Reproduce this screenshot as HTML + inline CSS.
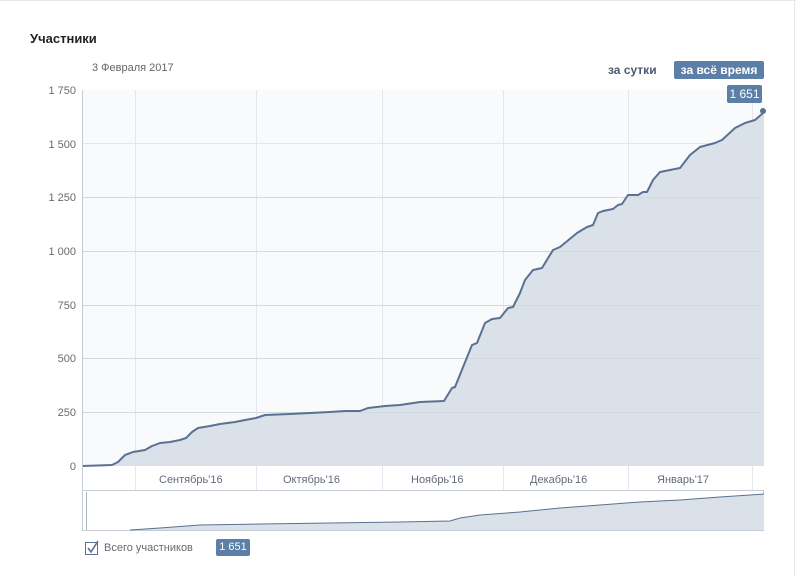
<!DOCTYPE html>
<html><head><meta charset="utf-8"><style>
body{margin:0;width:796px;height:576px;background:#fff;font-family:"Liberation Sans","DejaVu Sans",sans-serif;overflow:hidden;position:relative}
.t{position:absolute;white-space:nowrap;z-index:2}
</style></head><body>
<div style="position:absolute;left:0;top:0;width:796px;height:1px;background:#e7e8ec"></div>
<div style="position:absolute;left:794px;top:0;width:1px;height:576px;background:#e7e8ec"></div>
<svg style="position:absolute;left:0;top:0;z-index:1" width="796" height="576">
<rect x="82" y="90" width="681" height="376" fill="#f9fafb"/>
<g stroke="#e3e6ea" stroke-width="1">
<line x1="82" y1="143.5" x2="763" y2="143.5"/><line x1="82" y1="197.5" x2="763" y2="197.5"/><line x1="82" y1="251.5" x2="763" y2="251.5"/><line x1="82" y1="305.5" x2="763" y2="305.5"/><line x1="82" y1="358.5" x2="763" y2="358.5"/><line x1="82" y1="412.5" x2="763" y2="412.5"/>
<line x1="135.5" y1="90" x2="135.5" y2="490"/><line x1="256.5" y1="90" x2="256.5" y2="490"/><line x1="382.5" y1="90" x2="382.5" y2="490"/><line x1="503.5" y1="90" x2="503.5" y2="490"/><line x1="628.5" y1="90" x2="628.5" y2="490"/><line x1="752.5" y1="90" x2="752.5" y2="490"/>
</g>
<path d="M82,466 L112,465 118,462 125,455 133,452 145,450 152,446 160,443 170,442 180,440 186,438 192,432 198,428 210,426 220,424 235,422 245,420 256,418 265,415 290,414 310,413 330,412 345,411 360,411 368,408 385,406 400,405 420,402 444,401 452,388 455,387 472,345 477,343 485,323 492,319 500,318 508,308 513,307 520,293 525,280 533,270 542,268 553,250 560,247 577,233 587,227 593,225 598,213 603,211 613,209 618,205 622,204 628,195 638,195 643,192 647,192 653,180 660,172 670,170 680,168 690,155 700,147 715,143 722,140 735,128 745,123 755,120 762,114 764,111 L764,466 Z" fill="#dae1e8"/>
<g stroke="#d2d9e1"><line x1="82" y1="412.5" x2="763" y2="412.5"/><line x1="82" y1="358.5" x2="763" y2="358.5"/><line x1="82" y1="305.5" x2="763" y2="305.5"/><line x1="82" y1="251.5" x2="763" y2="251.5"/><line x1="82" y1="197.5" x2="763" y2="197.5"/></g>
<path d="M82,466 L112,465 118,462 125,455 133,452 145,450 152,446 160,443 170,442 180,440 186,438 192,432 198,428 210,426 220,424 235,422 245,420 256,418 265,415 290,414 310,413 330,412 345,411 360,411 368,408 385,406 400,405 420,402 444,401 452,388 455,387 472,345 477,343 485,323 492,319 500,318 508,308 513,307 520,293 525,280 533,270 542,268 553,250 560,247 577,233 587,227 593,225 598,213 603,211 613,209 618,205 622,204 628,195 638,195 643,192 647,192 653,180 660,172 670,170 680,168 690,155 700,147 715,143 722,140 735,128 745,123 755,120 762,114 764,111" fill="none" stroke="#5a7192" stroke-width="2" stroke-linejoin="round"/>
<circle cx="763" cy="111" r="3" fill="#5a7192"/>
<line x1="82.5" y1="90" x2="82.5" y2="530" stroke="#c5ccd5"/>
<line x1="82" y1="490.5" x2="764" y2="490.5" stroke="#c5ccd5"/>
<line x1="82" y1="530.5" x2="764" y2="530.5" stroke="#c5ccd5"/>
<line x1="763.5" y1="490" x2="763.5" y2="530" stroke="#c5ccd5"/>
<line x1="86.5" y1="492" x2="86.5" y2="530" stroke="#b0b8c3"/>
<path d="M130,530 L160,528 200,525 260,524 330,523 400,522 450,521 460,518 480,515 520,512 560,508 600,505 640,502 680,500 720,497 764,494 L764,530 Z" fill="#dae1e8"/>
<path d="M130,530 L160,528 200,525 260,524 330,523 400,522 450,521 460,518 480,515 520,512 560,508 600,505 640,502 680,500 720,497 764,494" fill="none" stroke="#5a7192" stroke-width="1"/>
<rect x="85.5" y="542.5" width="12" height="12" fill="#fff" stroke="#5a7192"/>
<path d="M88,548 L91,552 L98,541" fill="none" stroke="#5a7192" stroke-width="1.6"/>
</svg>
<div class="t" style="left:30px;top:31px;font-size:13px;font-weight:bold;color:#222">Участники</div>
<div class="t" style="left:92px;top:62px;font-size:11px;color:#656565">3 Февраля 2017</div>
<div class="t" style="left:608px;top:63px;font-size:12px;font-weight:bold;color:#4a5a70">за сутки</div>
<div class="t" style="left:674px;top:61px;width:90px;height:18px;background:#5b7fa6;border-radius:2px;color:#fff;font-size:12px;font-weight:bold;text-align:center;line-height:18px">за всё время</div>
<div class="t" style="left:727px;top:85px;width:35px;height:18px;background:#5b7fa6;border-radius:2px;color:#fff;font-size:12px;text-align:center;line-height:18px">1 651</div>
<div class="t" style="right:720px;top:85px;font-size:11px;color:#656b73">1 750</div>
<div class="t" style="right:720px;top:139px;font-size:11px;color:#656b73">1 500</div>
<div class="t" style="right:720px;top:192px;font-size:11px;color:#656b73">1 250</div>
<div class="t" style="right:720px;top:246px;font-size:11px;color:#656b73">1 000</div>
<div class="t" style="right:720px;top:300px;font-size:11px;color:#656b73">750</div>
<div class="t" style="right:720px;top:353px;font-size:11px;color:#656b73">500</div>
<div class="t" style="right:720px;top:407px;font-size:11px;color:#656b73">250</div>
<div class="t" style="right:720px;top:461px;font-size:11px;color:#656b73">0</div>
<div class="t" style="left:159px;top:474px;font-size:11px;color:#656b73">Сентябрь'16</div>
<div class="t" style="left:283px;top:474px;font-size:11px;color:#656b73">Октябрь'16</div>
<div class="t" style="left:411px;top:474px;font-size:11px;color:#656b73">Ноябрь'16</div>
<div class="t" style="left:530px;top:474px;font-size:11px;color:#656b73">Декабрь'16</div>
<div class="t" style="left:657px;top:474px;font-size:11px;color:#656b73">Январь'17</div>
<div class="t" style="left:104px;top:542px;font-size:11px;color:#656b73">Всего участников</div>
<div class="t" style="left:216px;top:539px;width:34px;height:17px;background:#5b7fa6;border-radius:2px;color:#fff;font-size:11px;text-align:center;line-height:17px">1 651</div>
</body></html>
